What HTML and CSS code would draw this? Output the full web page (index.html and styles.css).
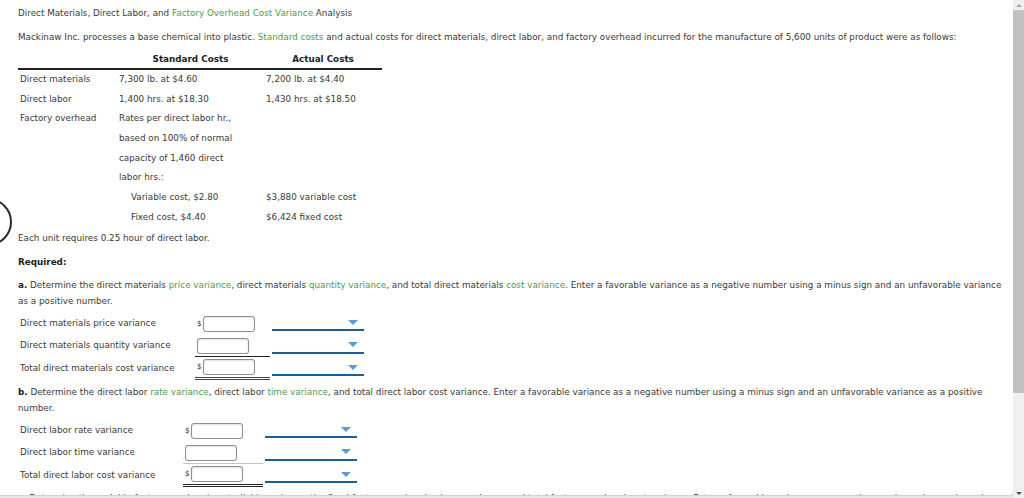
FILE: index.html
```html
<!DOCTYPE html>
<html>
<head>
<meta charset="utf-8">
<title>Cost Variance Analysis</title>
<link rel="stylesheet" href="styles.css">
</head>
<body>
<div class="viewport">
  <div class="main">
    <div class="content">
      <p class="title">Direct Materials, Direct Labor, and <span class="g">Factory Overhead Cost Variance</span> Analysis</p>
      <p class="intro">Mackinaw Inc. processes a base chemical into plastic. <span class="g">Standard costs</span> and actual costs for direct materials, direct labor, and factory overhead incurred for the manufacture of 5,600 units of product were as follows:</p>

      <div class="costs">
        <div class="th"></div><div class="th c">Standard Costs</div><div class="th c">Actual Costs</div>
        <div class="td">Direct materials</div><div class="td">7,300 lb. at $4.60</div><div class="td">7,200 lb. at $4.40</div>
        <div class="td">Direct labor</div><div class="td">1,400 hrs. at $18.30</div><div class="td">1,430 hrs. at $18.50</div>
        <div class="td">Factory overhead</div><div class="td">Rates per direct labor hr.,</div><div class="td"></div>
        <div class="td"></div><div class="td">based on 100% of normal</div><div class="td"></div>
        <div class="td"></div><div class="td">capacity of 1,460 direct</div><div class="td"></div>
        <div class="td"></div><div class="td">labor hrs.:</div><div class="td"></div>
        <div class="td"></div><div class="td ind">Variable cost, $2.80</div><div class="td">$3,880 variable cost</div>
        <div class="td"></div><div class="td ind">Fixed cost, $4.40</div><div class="td">$6,424 fixed cost</div>
      </div>

      <p class="note">Each unit requires 0.25 hour of direct labor.</p>
      <p class="req">Required:</p>

      <p class="q"><b>a.</b> Determine the direct materials <span class="g">price variance</span>, direct materials <span class="g">quantity variance</span>, and total direct materials <span class="g">cost variance</span>. Enter a favorable variance as a negative number using a minus sign and an unfavorable variance<br>as a positive number.</p>
      <div class="answers ans-a">
        <div class="lbl">Direct materials price variance</div>
        <div class="amt"><span class="cur">$</span><span class="box"></span></div>
        <div class="sel"><span class="tri"></span></div>

        <div class="lbl">Direct materials quantity variance</div>
        <div class="amt sub"><span class="box"></span></div>
        <div class="sel"><span class="tri"></span></div>

        <div class="lbl">Total direct materials cost variance</div>
        <div class="amt tot"><span class="cur">$</span><span class="box"></span></div>
        <div class="sel"><span class="tri"></span></div>
      </div>

      <p class="q qb"><b>b.</b> Determine the direct labor <span class="g">rate variance</span>, direct labor <span class="g">time variance</span>, and total direct labor cost variance. Enter a favorable variance as a negative number using a minus sign and an unfavorable variance as a positive<br>number.</p>
      <div class="answers ans-b">
        <div class="lbl">Direct labor rate variance</div>
        <div class="amt"><span class="cur">$</span><span class="box"></span></div>
        <div class="sel"><span class="tri"></span></div>

        <div class="lbl">Direct labor time variance</div>
        <div class="amt sub"><span class="box"></span></div>
        <div class="sel"><span class="tri"></span></div>

        <div class="lbl">Total direct labor cost variance</div>
        <div class="amt tot"><span class="cur">$</span><span class="box"></span></div>
        <div class="sel"><span class="tri"></span></div>
      </div>

      <p class="q qc"><b>c.</b> Determine the variable factory overhead controllable variance, the fixed factory overhead volume variance, and total factory overhead cost variance. Enter a favorable variance as a negative number using a minus sign and an unfavorable variance.</p>
    </div>
    <div class="hbar"></div>
  </div>
  <div class="vscroll">
    <div class="sb-btn"><span class="up"></span></div>
    <div class="thumb"></div>
    <div class="track"></div>
    <div class="sb-btn"><span class="down"></span></div>
  </div>
  <div class="nav-circle"><span class="nav-dash"></span></div>
</div>
</body>
</html>
```

FILE: styles.css
```css
* {
  box-sizing: border-box;
  margin: 0;
  padding: 0;
}

html, body {
  width: 1024px;
  height: 498px;
  overflow: hidden;
  background: #ffffff;
}

body {
  font-family: "DejaVu Sans", Verdana, sans-serif;
  font-size: 8.8px;
  color: #3a3a3a;
}

.viewport {
  position: relative;
  display: flex;
  height: 498px;
}

.main {
  flex: 1;
  min-width: 0;
  display: flex;
  flex-direction: column;
}

.content {
  flex: 1;
  overflow: hidden;
  padding: 5px 0 0 18px;
}

.g {
  color: #4f9b4a;
}

b {
  color: #222;
}

.title,
.intro,
.note,
.req,
.q {
  line-height: 16px;
  white-space: nowrap;
}

.intro {
  margin-top: 8px;
}

/* cost table */
.costs {
  margin-top: 4px;
  width: 364px;
  display: grid;
  grid-template-columns: 99px 147px 118px;
}

.th {
  height: 21px;
  line-height: 21px;
  border-bottom: 2px solid #222;
  font-weight: bold;
  color: #222;
}

.th.c {
  text-align: center;
}

.td {
  height: 19.7px;
  line-height: 19.7px;
  padding-left: 2px;
  white-space: nowrap;
}

.td.ind {
  padding-left: 14px;
}

.note {
  margin-top: 2.4px;
}

.req {
  margin-top: 8px;
  font-weight: bold;
  color: #222;
}

.q {
  margin-top: 7px;
}

.qb {
  margin-top: 4.75px;
}

.qc {
  margin-top: 3.75px;
}

/* answer grids */
.answers {
  margin-top: 2.75px;
  display: grid;
  grid-auto-rows: 22.5px;
  column-gap: 2px;
}

.ans-a {
  grid-template-columns: 175px 75px 92px;
}

.ans-b {
  grid-template-columns: 163px 80px 92px;
}

.lbl {
  padding-left: 2px;
  line-height: 22.5px;
  white-space: nowrap;
}

.amt {
  display: flex;
  align-items: flex-start;
  padding: 4px 0 0 2px;
}

.amt.sub {
  border-bottom: 1px solid #222;
}

.ans-b .amt.sub {
  border-bottom-color: #c4c4c4;
}

.amt.tot {
  padding-top: 2.5px;
}

.ans-a .amt.tot {
  border-bottom: 3px double #444;
  height: 23px;
}

.ans-b .amt.tot {
  border-bottom: 3px double #222;
  height: 23px;
}

.cur {
  width: 6px;
  font-size: 7.5px;
  line-height: 16px;
  color: #333;
}

.box {
  display: block;
  width: 52px;
  height: 16px;
  background: #fff;
  border: 1px solid #8e8e8e;
  border-radius: 3px;
  box-shadow: inset 0 1px 2px rgba(0, 0, 0, 0.12), 0 0 1px rgba(0, 0, 0, 0.15);
}

.sel {
  height: 19.5px;
  border-bottom: 2px solid #1b5f98;
  display: flex;
  justify-content: flex-end;
  padding: 8px 6px 0 0;
}

.tri {
  width: 0;
  height: 0;
  border-left: 5px solid transparent;
  border-right: 5px solid transparent;
  border-top: 5px solid #5a9ad6;
}

/* bottom strip */
.hbar {
  height: 3px;
  background: #e6e6e6;
  border-top: 1px solid #d2d2d2;
}

/* vertical scrollbar */
.vscroll {
  width: 11px;
  background: #f0f0f0;
  display: flex;
  flex-direction: column;
}

.sb-btn {
  height: 10px;
  display: flex;
  align-items: center;
  justify-content: center;
}

.up {
  width: 0;
  height: 0;
  border-left: 3px solid transparent;
  border-right: 3px solid transparent;
  border-bottom: 3px solid #a3a3a3;
}

.down {
  width: 0;
  height: 0;
  border-left: 3px solid transparent;
  border-right: 3px solid transparent;
  border-top: 3px solid #505050;
}

.thumb {
  height: 383px;
  background: #c1c1c1;
}

.track {
  flex: 1;
}

/* partially visible navigation circle at left edge */
.nav-circle {
  position: absolute;
  left: -36px;
  top: 198px;
  width: 48px;
  height: 48px;
  border: 2px solid #2a2a2a;
  border-radius: 50%;
}

.nav-dash {
  position: absolute;
  right: 10px;
  top: 21px;
  width: 3px;
  height: 1.5px;
  background: #555;
}
```
